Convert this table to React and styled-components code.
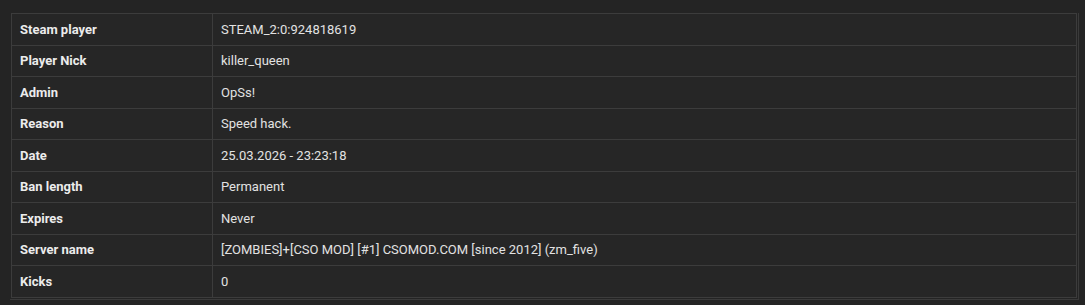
import styled, { createGlobalStyle } from "styled-components";

const GlobalStyle = createGlobalStyle`
  html, body {
    margin: 0;
    background: #242424;
  }
  body {
    font-family: Roboto, "Liberation Sans", sans-serif;
  }
`;

const Panel = styled.div`
  padding: 13px 6px 5px 10px;
`;

const Frame = styled.div`
  border-right: 1px solid #3a3a3a;
  border-bottom: 1px solid #3a3a3a;
  padding: 0 1px 1px 1px;
`;

const Table = styled.table`
  width: 100%;
  border-collapse: collapse;
  background: #262626;
  border: 1px solid #3c3c3c;
  font-size: 13px;
  color: #e4e4e4;
`;

const Row = styled.tr`
  height: 31.5px;
  border-bottom: 1px solid #3c3c3c;
`;

const Cell = styled.td`
  padding: 0 8px;
  border-left: 1px solid #3c3c3c;
  font-weight: ${(p) => (p.$label ? 700 : 400)};
  width: ${(p) => (p.$label ? "184px" : "auto")};
  color: ${(p) => (p.$label ? "#ececec" : "#e2e2e2")};
  white-space: nowrap;
`;

const rows = [
  ["Steam player", "STEAM_2:0:924818619"],
  ["Player Nick", "killer_queen"],
  ["Admin", "OpSs!"],
  ["Reason", "Speed hack."],
  ["Date", "25.03.2026 - 23:23:18"],
  ["Ban length", "Permanent"],
  ["Expires", "Never"],
  ["Server name", "[ZOMBIES]+[CSO MOD] [#1] CSOMOD.COM [since 2012] (zm_five)"],
  ["Kicks", "0"],
];

export default function App() {
  return (
    <>
      <GlobalStyle />
      <Panel>
        <Frame>
          <Table>
            <tbody>
              {rows.map(([label, value]) => (
                <Row key={label}>
                  <Cell $label>{label}</Cell>
                  <Cell>{value}</Cell>
                </Row>
              ))}
            </tbody>
          </Table>
        </Frame>
      </Panel>
    </>
  );
}
